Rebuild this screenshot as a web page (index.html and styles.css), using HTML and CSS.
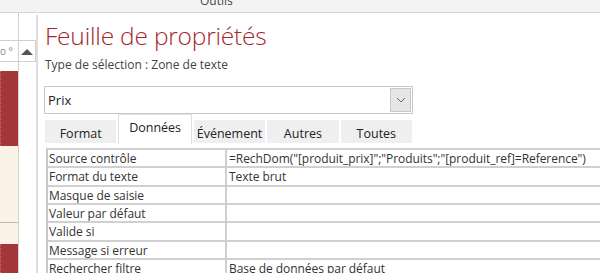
FILE: index.html
```
<!DOCTYPE html>
<html lang="fr">
<head>
    <meta charset="UTF-8">
    <title>Feuille de propriétés</title>
    <link rel="stylesheet" href="styles.css">
</head>
<body>
    <div class="toolbar"><span class="toolbar-label">Outils</span></div>

    <div class="main">
        <!-- formulaire derrière la feuille -->
        <div class="form-pane">
            <div class="records">
                <div class="rec-blank"></div>
                <div class="rec-header">o °</div>
                <div class="rec-gap"></div>
                <div class="rec-red rec-red-top"></div>
                <div class="rec-cream rec-cream-a"></div>
                <div class="rec-cream rec-cream-b"></div>
                <div class="rec-red"></div>
            </div>
            <div class="vscroll">
                <div class="rec-blank"></div>
                <div class="scroll-btn">
                    <svg width="12" height="7" viewBox="0 0 12 7"><polygon points="0,7 6,1 12,7" fill="#555"/></svg>
                </div>
                <div class="scroll-track"></div>
            </div>
        </div>

        <!-- feuille de propriétés -->
        <div class="sheet">
            <h1 class="sheet-title">Feuille de propriétés</h1>
            <div class="sel-type">Type de sélection : Zone de texte</div>

            <div class="combo">
                <span class="combo-value">Prix</span>
                <span class="combo-btn">
                    <svg width="10" height="6" viewBox="0 0 10 6"><polyline points="1,1 5,5 9,1" fill="none" stroke="#666" stroke-width="1"/></svg>
                </span>
            </div>

            <div class="tabs">
                <div class="tab">Format</div>
                <div class="tab tab-active">Données</div>
                <div class="tab">Événement</div>
                <div class="tab">Autres</div>
                <div class="tab">Toutes</div>
            </div>

            <div class="props">
                <div class="prop-row">
                    <div class="prop-name">Source contrôle</div>
                    <div class="prop-value">=RechDom("[produit_prix]";"Produits";"[produit_ref]=Reference")</div>
                </div>
                <div class="prop-row">
                    <div class="prop-name">Format du texte</div>
                    <div class="prop-value">Texte brut</div>
                </div>
                <div class="prop-row">
                    <div class="prop-name">Masque de saisie</div>
                    <div class="prop-value"></div>
                </div>
                <div class="prop-row">
                    <div class="prop-name">Valeur par défaut</div>
                    <div class="prop-value"></div>
                </div>
                <div class="prop-row">
                    <div class="prop-name">Valide si</div>
                    <div class="prop-value"></div>
                </div>
                <div class="prop-row">
                    <div class="prop-name">Message si erreur</div>
                    <div class="prop-value"></div>
                </div>
                <div class="prop-row">
                    <div class="prop-name">Rechercher filtre</div>
                    <div class="prop-value">Base de données par défaut</div>
                </div>
            </div>
        </div>
    </div>
</body>
</html>
```

FILE: styles.css
```
body {
    margin: 0;
    width: 600px;
    height: 273px;
    overflow: hidden;
    font-family: "Open Sans", "Noto Sans", sans-serif;
    color: #333;
    background: #fff;
}
.toolbar {
    height: 12px;
    background: #f3f3f3;
    border-bottom: 1px solid #d4d4d4;
    overflow: hidden;
    position: relative;
}
.toolbar-label {
    position: absolute;
    left: 200px;
    top: -8px;
    font-size: 12px;
    color: #444;
}
.main {
    display: flex;
    height: 260px;
}
.form-pane {
    display: flex;
    width: 36px;
    flex: none;
}
.records {
    width: 18px;
    display: flex;
    flex-direction: column;
    border-right: 1px solid #d0d0d0;
}
.rec-blank {
    height: 27px;
    flex: none;
}
.rec-header {
    height: 20px;
    border-top: 1px solid #d0d0d0;
    border-bottom: 1px solid #d0d0d0;
    font-size: 10px;
    line-height: 20px;
    color: #888;
    overflow: hidden;
    flex: none;
}
.rec-gap {
    height: 9px;
    flex: none;
}
.rec-red {
    background: #a3373a;
    border-left: 1px dotted #c97a5a;
    flex: 1;
}
.rec-red-top {
    flex: none;
    height: 75px;
}
.rec-cream {
    background: #fbf3e8;
    flex: none;
}
.rec-cream-a {
    height: 76px;
    border-bottom: 1px solid #bdb7ae;
}
.rec-cream-b {
    height: 21px;
}
.vscroll {
    width: 17px;
    display: flex;
    flex-direction: column;
}
.scroll-btn {
    height: 20px;
    border: 1px solid #d0d0d0;
    border-left: none;
    display: flex;
    align-items: center;
    justify-content: center;
    flex: none;
}
.scroll-track {
    flex: 1;
}
.sheet {
    flex: 1;
    border-left: 2px solid #dedede;
    margin-top: 2px;
    padding-left: 6px;
}
.sheet-title {
    margin: 5px 0 0 1px;
    font-size: 24.5px;
    font-weight: 300;
    line-height: 32px;
    letter-spacing: -0.2px;
    color: #a4262c;
}
.sel-type {
    font-size: 12px;
    margin: 4px 0 0 1px;
    color: #444;
}
.combo {
    margin-top: 13px;
    width: 367px;
    height: 26px;
    border: 1px solid #c8c8c8;
    display: flex;
    align-items: center;
    justify-content: space-between;
}
.combo-value {
    font-size: 13px;
    padding-left: 3px;
    color: #222;
}
.combo-btn {
    width: 19px;
    height: 22px;
    margin-right: 1px;
    background: #e6e6e6;
    border: 1px solid #c8c8c8;
    display: flex;
    align-items: center;
    justify-content: center;
}
.tabs {
    display: flex;
    gap: 2px;
    margin: 2px 0 0 1px;
    width: 367px;
    height: 28px;
    align-items: flex-end;
}
.tab {
    flex: 1;
    height: 23px;
    margin-bottom: 1px;
    background: #efefef;
    font-size: 12.5px;
    text-align: center;
    line-height: 27px;
    color: #222;
}
.tab-active {
    height: 29px;
    margin-bottom: 0;
    background: #fff;
    line-height: 25px;
    border: 1px solid #e0e0e0;
    border-bottom: none;
}
.props {
    margin: 4px 0 0 2px;
    border-left: 2px solid #c8c8c8;
    border-top: 2px solid #d0d0d0;
}
.prop-row {
    display: flex;
    height: 18.33px;
    border-bottom: 2px solid #d0d0d0;
    box-sizing: border-box;
    font-size: 12px;
    line-height: 17px;
    letter-spacing: -0.05px;
    color: #333;
}
.prop-name {
    width: 176px;
    padding-left: 1px;
    border-right: 2px solid #d0d0d0;
    white-space: nowrap;
    overflow: hidden;
}
.prop-value {
    flex: 1;
    padding-left: 2px;
    white-space: nowrap;
    overflow: hidden;
}
```
